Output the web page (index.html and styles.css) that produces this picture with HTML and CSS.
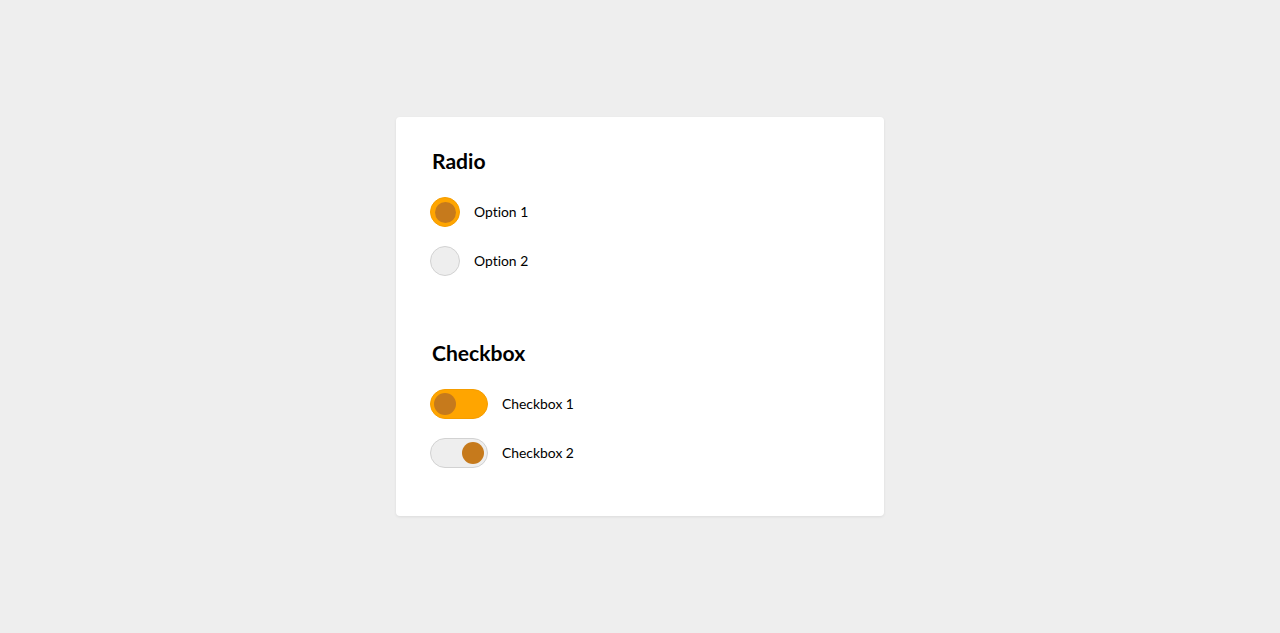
FILE: index.html
```html
<!DOCTYPE html>
<html lang="en">
<head>
<meta charset="utf-8">
<title>Radio and Checkbox</title>
<link rel="stylesheet" href="styles.css">
</head>
<body>
<main class="card">
  <section class="group">
    <h2 class="title">Radio</h2>
    <label class="row">
      <span class="radio checked"><span class="dot"></span></span>
      <span class="label">Option 1</span>
    </label>
    <label class="row">
      <span class="radio"></span>
      <span class="label">Option 2</span>
    </label>
  </section>
  <section class="group">
    <h2 class="title">Checkbox</h2>
    <label class="row">
      <span class="toggle on"><span class="knob"></span></span>
      <span class="label">Checkbox 1</span>
    </label>
    <label class="row">
      <span class="toggle off"><span class="knob"></span></span>
      <span class="label">Checkbox 2</span>
    </label>
  </section>
</main>
</body>
</html>
```

FILE: styles.css
```css
* { box-sizing: border-box; }
html, body { height: 100%; }
body {
  margin: 0;
  background: #eeeeee;
  font-family: Lato, "Open Sans", sans-serif;
  font-variant-ligatures: none;
  color: #000;
  display: flex;
  align-items: center;
  justify-content: center;
}
.card {
  width: 488px;
  height: 399px;
  background: #fff;
  border-radius: 4px;
  box-shadow: 0 1px 3px rgba(0,0,0,0.08);
  padding: 32px 34px 0 34px;
}
.group + .group { margin-top: 65px; }
.title {
  margin: 0 0 24px 2px;
  font-size: 21.1px;
  line-height: 24px;
  font-weight: 700;
}
.row {
  display: flex;
  align-items: center;
  gap: 14px;
  height: 30px;
}
.row + .row { margin-top: 19px; }
.label {
  font-size: 13.9px;
  line-height: 18px;
}
.radio {
  width: 30px;
  height: 30px;
  border-radius: 50%;
  background: #eeeeee;
  border: 1px solid #d2d2d2;
  display: flex;
  align-items: center;
  justify-content: center;
}
.radio.checked {
  background: #ffa500;
  border-color: #f59d00;
}
.dot {
  width: 21px;
  height: 21px;
  border-radius: 50%;
  background: #c67a1c;
}
.toggle {
  width: 58px;
  height: 30px;
  border-radius: 15px;
  border: 1px solid #d2d2d2;
  background: #eeeeee;
  display: flex;
  align-items: center;
  padding: 0 3px;
}
.toggle.on {
  background: #ffa500;
  border-color: #f59d00;
  justify-content: flex-start;
}
.toggle.off { justify-content: flex-end; }
.knob {
  width: 22px;
  height: 22px;
  border-radius: 50%;
  background: #c67a1c;
}
```
